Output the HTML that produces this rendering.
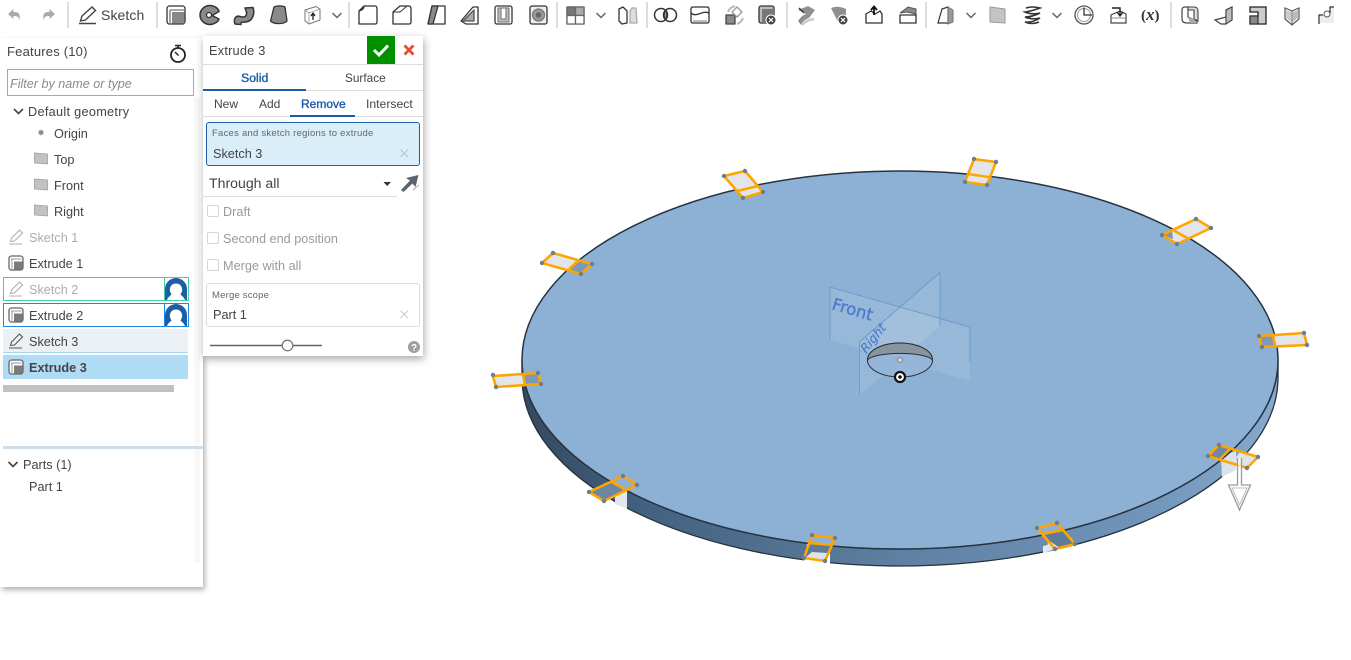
<!DOCTYPE html>
<html>
<head>
<meta charset="utf-8">
<style>
html,body{margin:0;padding:0;background:#fff;width:1351px;height:660px;overflow:hidden}
body{position:relative;font-family:"Liberation Sans",sans-serif;color:#333}
.a{position:absolute}
.t{position:absolute;white-space:nowrap;line-height:16px;height:16px;font-size:12.700px;color:#444}
.g{color:#adadad}
.cb{position:absolute;left:207px;width:10px;height:10px;border:1px solid #d5d5d5;border-radius:2px;background:#fff}
</style>
</head>
<body>

<!-- 3D viewport -->
<svg class="a" style="left:0;top:0" width="1351" height="660" viewBox="0 0 1351 660">
<defs>
<linearGradient id="band" x1="522" x2="1278" y1="0" y2="0" gradientUnits="userSpaceOnUse">
<stop offset="0" stop-color="#33495f"/><stop offset=".15" stop-color="#42607e"/><stop offset=".5" stop-color="#5f80a2"/><stop offset=".8" stop-color="#6f93b8"/><stop offset="1" stop-color="#86a9ce"/>
</linearGradient>
</defs>
<path d="M522 360 A378 189 0 0 0 1278 360 L1278 378 A378 188 0 0 1 522 378 Z" fill="url(#band)" stroke="#26323d" stroke-width="1.300"/>
<!-- notches in side -->
<path d="M615 494 L627 491 L627 509 L615 504 Z" fill="#e3e7eb"/>
<path d="M807 544 L830 546 L830 565 L804 563 Z" fill="#fff"/>
<path d="M810 551 L826 552 L825 559 L808 558 Z" fill="#dfe4e8"/>
<path d="M1043 546 L1066 541 L1066 546 L1043 553 Z" fill="#e6eaee"/>
<path d="M1221 456 L1236 451 L1236 470 L1222 478 Z" fill="#dbe3ea"/>
<path d="M1224 476 L1236 470 L1236 484 L1224 484 Z" fill="#fff"/>
<ellipse cx="900" cy="360" rx="378" ry="189" fill="#8db0d5" stroke="#27333f" stroke-width="1.500"/>
<!-- planes -->
<path d="M830 287 L970 327 L970 381 L830 340 Z" fill="#fff" fill-opacity=".1"/>
<path d="M859.500 342 L940 272.500 L940 326 L859.500 395 Z" fill="#fff" fill-opacity=".1"/>
<path d="M830 340 V287 L970 327 V362" fill="none" stroke="#6d9bcb" stroke-width="1"/>
<path d="M859.500 395 V342 L940 272.500 V326" fill="none" stroke="#6d9bcb" stroke-width="1"/>
<!-- hole -->
<ellipse cx="900" cy="360" rx="32.500" ry="17" fill="#95b6d9" stroke="#2a2f35" stroke-width="1"/>
<path d="M867.500 360 A32.500 17 0 0 1 932.500 360 A33 8 0 0 0 867.500 360 Z" fill="#8a949e" stroke="#2a2f35" stroke-width="1"/>
<circle cx="900" cy="360" r="2.500" fill="#cfd6dc" stroke="#85909a" stroke-width="1.200"/>
<text transform="matrix(.96 .28 -.28 .96 831 309)" font-family="DejaVu Sans" font-size="16.500" fill="#4b7ccb" stroke="#4b7ccb" stroke-width=".35">Front</text>
<text transform="matrix(.62 -.78 .72 .7 866 354)" font-family="DejaVu Sans" font-style="italic" font-size="12.500" fill="#4b7ccb" stroke="#4b7ccb" stroke-width=".2">Right</text>
<circle cx="900" cy="377" r="5" fill="#fff" stroke="#111" stroke-width="2.200"/>
<circle cx="900" cy="377" r="1.800" fill="#111"/>

<!-- sketch quads -->
<g stroke-linejoin="round">
<g fill="#e2e6ea" stroke="none">
<path d="M542 263 L553 253 L592 264 L581 274Z"/>
<path d="M493 375 L538 373 L541 384 L496 387Z"/>
<path d="M724 176 L745 171 L763 192 L743 198Z"/>
<path d="M974 159 L996 162 L987 185 L965 182Z"/>
<path d="M1162 235 L1196 219 L1211 228 L1177 244Z"/>
<path d="M1259 336 L1304 333 L1307 345 L1262 347Z"/>
</g>
<g fill="#7e99b8" stroke="none">
<path d="M578 261 L592 264 L581 274 L569 269Z"/>
<path d="M523 374 L538 373 L541 384 L524 385Z"/>
<path d="M1259 336 L1273 335 L1275 346 L1262 347Z"/>
<path d="M1162 235 L1172 230 L1173 239Z" />
<path d="M1219 446 L1230 449 L1220 459 L1208 456Z" fill="#6d88a5"/>
<path d="M612 482 L623 476 L637 485 L626 490Z" fill="#8db0d5"/>
<path d="M590 492 L612 482 L626 490 L604 501Z" fill="#6d87a3"/>
<path d="M812 535 L835 538 L832 545 L809 543Z" fill="#8db0d5"/>
<path d="M809 543 L833 545 L825 561 L804 558Z" fill="#5f7b98"/>
<path d="M1037 528 L1057 523 L1063 530 L1043 534Z" fill="#8db0d5"/>
<path d="M1043 534 L1063 530 L1075 544 L1055 549Z" fill="#5f7b98"/>
</g>
<path d="M812 552 L827 553 L825 561 L805 558Z" fill="#dfe4e8"/>
<path d="M1048 540 L1060 548 L1055 549 L1047 551Z" fill="#dfe4e8"/>
<path d="M1246 468 L1258 457 L1240 452 L1232 462Z" fill="#dfe4e8"/>
<g fill="none" stroke="#ffa500" stroke-width="2.600">
<path d="M542 263 L553 253 L592 264 L581 274Z M578 261 L569 269"/>
<path d="M493 376 L538 373 L541 384 L496 387Z M523 374 L525 385"/>
<path d="M724 176 L745 171 L763 192 L743 198Z M737 191 L758 186"/>
<path d="M974 159 L996 162 L987 185 L965 182Z M968 174 L989 177"/>
<path d="M1162 235 L1196 219 L1211 228 L1177 244Z M1173 230 L1189 239"/>
<path d="M1259 336 L1304 333 L1307 345 L1262 347Z M1273 335 L1275 346"/>
<path d="M1208 456 L1219 445 L1258 457 L1247 468Z M1230 449 L1220 459"/>
<path d="M812 535 L835 538 L825 561 L804 558Z M809 543 L833 545"/>
<path d="M1037 528 L1057 523 L1075 544 L1055 549Z M1043 534 L1063 530"/>
<path d="M589 492 L623 476 L637 485 L604 501Z M612 482 L626 490"/>
</g>
<g fill="#6a7d92">
<circle cx="542" cy="263" r="2.200"/><circle cx="553" cy="253" r="2.200"/><circle cx="592" cy="264" r="2.200"/><circle cx="581" cy="274" r="2.200"/>
<circle cx="493" cy="375" r="2.200"/><circle cx="538" cy="373" r="2.200"/><circle cx="541" cy="384" r="2.200"/><circle cx="496" cy="387" r="2.200"/>
<circle cx="724" cy="176" r="2.200"/><circle cx="745" cy="171" r="2.200"/><circle cx="763" cy="192" r="2.200"/><circle cx="743" cy="198" r="2.200"/>
<circle cx="974" cy="159" r="2.200"/><circle cx="996" cy="162" r="2.200"/><circle cx="987" cy="185" r="2.200"/><circle cx="965" cy="182" r="2.200"/>
<circle cx="1162" cy="235" r="2.200"/><circle cx="1196" cy="219" r="2.200"/><circle cx="1211" cy="228" r="2.200"/><circle cx="1177" cy="244" r="2.200"/>
<circle cx="1259" cy="336" r="2.200"/><circle cx="1304" cy="333" r="2.200"/><circle cx="1307" cy="345" r="2.200"/><circle cx="1262" cy="347" r="2.200"/>
<circle cx="1208" cy="456" r="2.200"/><circle cx="1219" cy="445" r="2.200"/><circle cx="1258" cy="457" r="2.200"/><circle cx="1247" cy="468" r="2.200"/>
<circle cx="812" cy="535" r="2.200"/><circle cx="835" cy="538" r="2.200"/><circle cx="825" cy="561" r="2.200"/><circle cx="804" cy="558" r="2.200"/>
<circle cx="1037" cy="528" r="2.200"/><circle cx="1057" cy="523" r="2.200"/><circle cx="1075" cy="544" r="2.200"/><circle cx="1055" cy="549" r="2.200"/>
<circle cx="589" cy="492" r="2.200"/><circle cx="623" cy="476" r="2.200"/><circle cx="637" cy="485" r="2.200"/><circle cx="604" cy="501" r="2.200"/>
</g>
</g>
<!-- direction arrow -->
<path d="M1237.500 458 V485 H1228.500 L1239.500 510 L1250.500 485 H1241.500 V458" fill="#fff" fill-opacity=".7" stroke="#9a9a9a" stroke-width="1.300"/>
<path d="M1232 488 H1247 L1239.500 505 Z" fill="none" stroke="#bdbdbd" stroke-width="1"/>
</svg>

<!-- left panel -->
<div class="a" style="left:0;top:38px;width:203px;height:549px;background:#fff;box-shadow:2px 3px 5px rgba(0,0,0,.3)"></div>
<div class="a" style="left:194px;top:98px;width:6px;height:465px;background:#f8f8f8"></div>
<div class="t" style="left:7px;top:44px;font-size:13px;letter-spacing:.2px">Features (10)</div>
<div class="a" style="left:7px;top:69px;width:185px;height:25px;border:1px solid #a8a8a8;background:#fff"></div>
<div class="t" style="left:10px;top:76px;font-style:italic;font-size:12.600px;color:#8a8a8a">Filter by name or type</div>

<div class="t" style="left:28px;top:104px;letter-spacing:.3px">Default geometry</div>
<div class="t" style="left:54px;top:126px">Origin</div>
<div class="t" style="left:54px;top:152px">Top</div>
<div class="t" style="left:54px;top:178px">Front</div>
<div class="t" style="left:54px;top:204px">Right</div>
<div class="t g" style="left:29px;top:230px">Sketch 1</div>
<div class="t" style="left:29px;top:256px">Extrude 1</div>

<div class="a" style="left:3px;top:277px;width:184px;height:22px;border:1px solid #44cf9f"></div>
<div class="a" style="left:164px;top:277px;width:1px;height:24px;background:#44cf9f"></div>
<div class="t g" style="left:29px;top:282px">Sketch 2</div>
<div class="a" style="left:3px;top:303px;width:184px;height:22px;border:1px solid #1e8ae6"></div>
<div class="a" style="left:164px;top:303px;width:1px;height:24px;background:#1e8ae6"></div>
<div class="t" style="left:29px;top:308px">Extrude 2</div>
<div class="a" style="left:3px;top:329px;width:185px;height:23px;background:#ebf0f4;border-bottom:1px solid #a5d6f3"></div>
<div class="t" style="left:29px;top:334px">Sketch 3</div>
<div class="a" style="left:3px;top:355px;width:185px;height:24px;background:#b0dbf5"></div>
<div class="t" style="left:29px;top:360px;font-weight:bold">Extrude 3</div>
<div class="a" style="left:3px;top:385px;width:171px;height:7px;background:#c1c1c1"></div>
<div class="a" style="left:3px;top:446px;width:200px;height:3px;background:#cfdde8"></div>
<div class="t" style="left:23px;top:457px">Parts (1)</div>
<div class="t" style="left:29px;top:479px">Part 1</div>

<!-- panel icons -->
<svg class="a" style="left:0;top:0" width="203" height="500" viewBox="0 0 203 500">
<defs>
<g id="ext"><rect x="-7" y="-7" width="14" height="14" rx="2.500" fill="#fff" stroke="#666" stroke-width="1.300"/><path d="M-5 -4 H5.500 M-4 -3.500 V6" stroke="#999" fill="none"/><rect x="-2" y="-1.500" width="8.500" height="8" fill="#7b7b7b"/></g>
<g id="pen"><path d="M-7 7 H6 M-5.500 4.500 L-4.500 1 L3.500 -7 L6.500 -4 L-1.500 4 Z" fill="none" stroke="currentColor" stroke-width="1.100"/></g>
<path id="pl" d="M-6.500 -5 L6.500 -4 V6 L-6.500 5 Z" fill="#c2c2c2" stroke="#9f9f9f" stroke-width=".8"/>
<g id="av"><rect x="-11" y="-11" width="22" height="22" fill="#fff"/><path d="M-11 11 V0 A11 11 0 0 1 11 0 V11 H9 C8 8 6 7 4.500 5.500 C6 3 6.500 1 6 -1 C5 -4 3 -5.500 0 -5.500 C-3 -5.500 -5 -4 -6 -1 C-6.500 1 -6 3 -4.500 5.500 C-6 7 -8 8 -9 11 Z" fill="#1c5fa6"/></g>
</defs>
<path d="M14 109 L18.500 113.500 L23 109" fill="none" stroke="#444" stroke-width="1.600"/>
<path d="M8.500 462 L13 466.500 L17.500 462" fill="none" stroke="#444" stroke-width="1.600"/>
<circle cx="41" cy="132.500" r="2.500" fill="#888" stroke="#ccc"/>
<use href="#pl" x="41" y="158"/><use href="#pl" x="41" y="184"/><use href="#pl" x="41" y="210"/>
<use href="#pen" x="16" y="237" color="#b0b0b0"/>
<use href="#ext" x="16" y="263"/>
<use href="#pen" x="16" y="289" color="#b0b0b0"/>
<use href="#ext" x="16" y="315"/>
<use href="#pen" x="16" y="341" color="#555"/>
<use href="#ext" x="16" y="367"/>
<use href="#av" x="176" y="289"/>
<use href="#av" x="176" y="315"/>
<!-- stopwatch -->
<circle cx="178" cy="55" r="7" fill="#fff" stroke="#222" stroke-width="1.800"/>
<path d="M175 45.500 H181 M178 46 V48 M175 52 L178.500 55.500" stroke="#222" stroke-width="1.500" fill="none"/>
</svg>

<!-- dialog -->
<div class="a" style="left:203px;top:36px;width:220px;height:320px;background:#fff;box-shadow:1px 3px 8px rgba(0,0,0,.35)"></div>
<div class="a" style="left:203px;top:64px;width:220px;height:1px;background:#ddd"></div>
<div class="a" style="left:367px;top:36px;width:28px;height:28px;background:#009100"></div>
<div class="t" style="left:209px;top:43px;font-size:12.800px;letter-spacing:.2px">Extrude 3</div>
<div class="t" style="left:241px;top:70px;color:#1b5aa8;font-size:12.300px;-webkit-text-stroke:.35px #1b5aa8">Solid</div>
<div class="t" style="left:345px;top:70px;font-size:11.800px;color:#444">Surface</div>
<div class="a" style="left:203px;top:90px;width:220px;height:1px;background:#ddd"></div>
<div class="a" style="left:203px;top:89px;width:103px;height:2px;background:#1b5aa8"></div>
<div class="t" style="left:214px;top:96px;font-size:12px;color:#444">New</div>
<div class="t" style="left:259px;top:96px;font-size:12px;color:#444">Add</div>
<div class="t" style="left:301px;top:96px;font-size:12px;color:#1b5aa8;-webkit-text-stroke:.35px #1b5aa8">Remove</div>
<div class="t" style="left:366px;top:96px;font-size:12.200px;color:#444">Intersect</div>
<div class="a" style="left:203px;top:116px;width:220px;height:1px;background:#ddd"></div>
<div class="a" style="left:290px;top:115px;width:65px;height:2px;background:#1b5aa8"></div>

<div class="a" style="left:206px;top:122px;width:212px;height:42px;background:#d9eef8;border:1px solid #1f5fa8;border-radius:3px"></div>
<div class="t" style="left:212px;top:125.500px;font-size:9.500px;letter-spacing:.24px;color:#666">Faces and sketch regions to extrude</div>
<div class="t" style="left:213px;top:146px;font-size:12.700px;color:#444">Sketch 3</div>
<div class="t" style="left:209px;top:175px;font-size:14.100px;color:#444">Through all</div>
<div class="a" style="left:203px;top:196px;width:194px;height:1px;background:#ddd"></div>

<div class="cb" style="top:205px"></div>
<div class="t g" style="left:223px;top:204px;color:#9a9a9a">Draft</div>
<div class="cb" style="top:232px"></div>
<div class="t g" style="left:223px;top:231px;color:#9a9a9a">Second end position</div>
<div class="cb" style="top:259px"></div>
<div class="t g" style="left:223px;top:258px;color:#9a9a9a">Merge with all</div>

<div class="a" style="left:206px;top:283px;width:212px;height:42px;border:1px solid #ddd;border-radius:3px"></div>
<div class="t" style="left:212px;top:288px;font-size:9.500px;letter-spacing:.2px;color:#666">Merge scope</div>
<div class="t" style="left:213px;top:307px;font-size:12.700px;color:#444">Part 1</div>

<svg class="a" style="left:203px;top:36px" width="220" height="320" viewBox="203 36 220 320">
<path d="M374 50 L379 55 L388 45.500" fill="none" stroke="#fff" stroke-width="3"/>
<path d="M404.500 45.500 L413.500 54.500 M413.500 45.500 L404.500 54.500" stroke="#e2502c" stroke-width="2.800"/>
<path d="M400.500 149.500 L408 157 M408 149.500 L400.500 157" stroke="#b9c6cd" stroke-width="1"/>
<path d="M400.500 310.500 L408 318 M408 310.500 L400.500 318" stroke="#ccc" stroke-width="1"/>
<path d="M383.500 182 H391 L387.200 186 Z" fill="#333"/>
<path d="M401 190 L410 180.500 L406 178 L418.500 175 L415.500 187 L412.500 183.500 L403.500 192 Z" fill="#5b646c"/>
<path d="M413 190 L419 185" stroke="#aaa" stroke-width="1"/>
<path d="M210 345.500 H322" stroke="#666" stroke-width="1.500"/>
<circle cx="287.500" cy="345.500" r="5.300" fill="#fff" stroke="#666" stroke-width="1.100"/>
<circle cx="414" cy="347" r="6" fill="#9aa0a6"/>
<text x="414" y="351" text-anchor="middle" font-family="Liberation Sans" font-weight="bold" font-size="10" fill="#fff">?</text>
</svg>

<!-- toolbar -->
<div class="t" style="left:101px;top:7px;font-size:14px;color:#444;letter-spacing:.1px">Sketch</div>
<svg class="a" style="left:0;top:0" width="1335" height="34" viewBox="0 0 1335 34">
<defs>
<g id="chev"><path d="M-4.500 -2 L0 2.500 L4.500 -2" fill="none" stroke="#666" stroke-width="1.500"/></g>
<rect id="sep" x="-1" y="2" width="2" height="26" fill="#ddd"/>
</defs>
<use href="#sep" x="68" y="0"/><use href="#sep" x="157" y="0"/><use href="#sep" x="349" y="0"/><use href="#sep" x="557" y="0"/><use href="#sep" x="647" y="0"/><use href="#sep" x="787" y="0"/><use href="#sep" x="926" y="0"/><use href="#sep" x="1171" y="0"/>
<use href="#chev" x="337" y="15"/><use href="#chev" x="601" y="15"/><use href="#chev" x="971" y="15"/><use href="#chev" x="1057" y="15"/>
<!-- undo/redo -->
<path d="M8 14 L13.500 9 V12 H15 C19 12 20.500 15 19.500 20 C18.500 16.500 17 16 13.500 16 V19 Z" fill="#aaa"/>
<path d="M55 14 L49.500 9 V12 H48 C44 12 42.500 15 43.500 20 C44.500 16.500 46 16 49.500 16 V19 Z" fill="#aaa"/>
<!-- pencil -->
<path d="M79 23.500 H96 M80.500 21 L82 16 L92 7 L95.500 10.500 L85.500 20 Z" fill="none" stroke="#444" stroke-width="1.400"/>
<g fill="none" stroke="#333" stroke-width="1.300" stroke-linejoin="round">
<!-- extrude -->
<rect x="167" y="6" width="18" height="18" rx="2.500" fill="#fff"/><path d="M170 10 H184 M170 10 V23" stroke="#777"/><rect x="172" y="12" width="12.500" height="11.500" fill="#888" stroke="none"/>
<!-- revolve -->
<path d="M213 6 C206 4 200 9 200 15 C200 21 206 26 213 24 C216 23 218.500 21 219 19 L212 15.500 L219 11.500 C218.500 9 216 7 213 6 Z" fill="#8a8a8a" stroke-width="1.500"/><circle cx="209" cy="15" r="2.500" fill="#fff"/>
<!-- sweep -->
<path d="M235 24 C233 19 236 15 240 16.500 C245 18 247 16 246.500 12 L245 8 L253 7.500 C255 13 253 21 246 22 C242 22.500 241 21 241 24.500 Z" fill="#8a8a8a" stroke-width="1.500"/>
<!-- loft -->
<path d="M274 7 C277 5.500 282 5.500 285 7 L287 21 C284 24.500 274 24.500 270.500 21 Z" fill="#8a8a8a"/>
<!-- thicken -->
<path d="M305 10 L316 6.500 L320 9 V20 L309 24 L305 21 Z" fill="#fff" stroke="#777" stroke-width="1"/><path d="M305 10 L309 13 V24 M309 13 L320 9" stroke="#999" stroke-width=".8"/><path d="M313 20 V14 M311 16 L313 13 L315 16" stroke="#222" stroke-width="1.300"/>
<!-- fillet -->
<path d="M359 24 V11 L364 6 H375 Q377 6 377 9 V22 Q377 24 375 24 Z" fill="#fff"/><path d="M359 11 C362 10 364 9 364 6" />
<!-- chamfer -->
<path d="M393 24 V12 L400 6 H409 Q411 6 411 9 V22 Q411 24 409 24 Z" fill="#fff"/><path d="M393 12 H400 L407 6" stroke-width="1"/>
<!-- draft -->
<path d="M428 24 L432 6 H445 V24 Z" fill="#fff"/><path d="M428 24 L432 6 H438 L433 24 Z" fill="#8a8a8a"/>
<!-- rib -->
<path d="M461 21 L473 7 H478 V24 H466 Z" fill="#fff"/><path d="M463 21 L474 10 V21 Z" fill="#aaa" stroke="#555"/>
<!-- shell -->
<rect x="495" y="6" width="17" height="18" rx="2" fill="#fff"/><rect x="498" y="8" width="11" height="14" fill="#bbb" stroke="#888"/><rect x="501" y="8" width="5" height="11" fill="#fff" stroke="#888"/>
<!-- hole -->
<rect x="530" y="6" width="17" height="18" rx="2" fill="#eee"/><circle cx="538.500" cy="15" r="6" fill="#999" stroke="#777"/><circle cx="538.500" cy="15" r="2.800" fill="#666" stroke="none"/>
<!-- pattern -->
<rect x="567" y="7" width="17" height="17" fill="#fff" stroke="#555"/><rect x="567" y="7" width="8.500" height="8.500" fill="#777" stroke="#666"/><rect x="575.500" y="7" width="8.500" height="8.500" fill="#aaa" stroke="#666"/><rect x="567" y="15.500" width="8.500" height="8.500" fill="#fff" stroke="#666"/><rect x="575.500" y="15.500" width="8.500" height="8.500" fill="#fff" stroke="#666"/>
<!-- mirror -->
<path d="M619 9 L623 7 L627 11 V23 L622 24 L619 21 Z" fill="#fff"/><path d="M630 11 L632 8 L636 8 L637 23 H630 Z" fill="#ddd" stroke="#aaa"/>
<!-- boolean -->
<circle cx="661" cy="15" r="6.500" fill="#fff" stroke-width="1.500"/><circle cx="670" cy="15" r="6.500" fill="none" stroke-width="1.500"/><path d="M665.500 10.500 C667.500 13 667.500 17 665.500 19.500 C663.500 17 663.500 13 665.500 10.500 Z" fill="#999"/>
<!-- split -->
<path d="M691 9 Q691 7 693 7 H707 Q709 7 709 9 V21 Q709 23 707 23 H693 Q691 23 691 21 Z" fill="#fff"/><path d="M691 13 C696 18 702 10 709 13" /><path d="M693 21 H707" stroke="#999"/>
<!-- transform -->
<rect x="726" y="15" width="9" height="9" fill="#8a8a8a" stroke="#444"/><path d="M737 7 L742 12 L737 17 L732 12 Z" fill="#fff" stroke="#999"/><path d="M728 12 A10 10 0 0 1 735 6 M743 18 A10 10 0 0 1 737 24" stroke="#bbb" stroke-width="2"/>
<!-- delete -->
<rect x="759" y="6" width="15" height="17" rx="2" fill="#bbb"/><rect x="762" y="9" width="12" height="14" fill="#777" stroke="none"/>
</g>
<circle cx="771" cy="20" r="5" fill="#444" stroke="#fff"/><path d="M769 18 L773 22 M773 18 L769 22" stroke="#fff" stroke-width="1.200"/>
<!-- direct edit icons -->
<path d="M798 10 L808 6 L815 10 L809 18 Q803 20 801 25 L798 21 Q802 15 806 14 Z" fill="#8f8f8f"/><path d="M799 8 L804 13" stroke="#333" stroke-width="1.300"/><path d="M802 25 Q806 20 814 19" stroke="#ccc" stroke-width="2.500" fill="none"/>
<path d="M831 8 Q838 5 846 9 V17 L838 22 Q834 14 831 8 Z" fill="#8f8f8f"/><circle cx="843" cy="20" r="5" fill="#444" stroke="#fff"/><path d="M841 18 L845 22 M845 18 L841 22" stroke="#fff" stroke-width="1.200"/>
<path d="M866 14 L871 11 L875 14 L880 11 L882 14 V23 H866 Z" fill="#fff" stroke="#333" stroke-width="1.300"/><path d="M874 15 V8 M871 10 L874 6.500 L877 10" stroke="#111" stroke-width="1.800" fill="none"/>
<path d="M900 13 L908 7 L916 9 V14 L907 12 Z" fill="#8a8a8a" stroke="#555"/><path d="M900 15 H916 V23 H900 Z" fill="#fff" stroke="#333" stroke-width="1.300"/>
<!-- plane tools -->
<path d="M938 23 L942 9 L948 7 V23 Z" fill="#fff" stroke="#333" stroke-width="1.200"/><path d="M948 7 L953 10 V22 L948 24 Z" fill="#9a9a9a" stroke="#777"/>
<path d="M990 7 L1005 9 V23 L990 22 Z" fill="#c4c4c4" stroke="#999"/>
<!-- helix -->
<path d="M1026 8 Q1032 6 1040 8 Q1032 11 1025 12 Q1032 15 1040 13 Q1032 17 1025 17 Q1032 20 1040 18 Q1032 23 1025 22 Q1032 25 1039 22" fill="none" stroke="#333" stroke-width="1.600"/>
<!-- clock -->
<circle cx="1084" cy="15" r="9" fill="#fff" stroke="#555" stroke-width="1.300"/><circle cx="1084" cy="15" r="6.500" fill="none" stroke="#999"/><path d="M1084 7.500 V15 H1092" fill="none" stroke="#333" stroke-width="1.300"/>
<!-- variable studio -->
<path d="M1111 15 L1120 11 L1126 14 V23 H1111 Z" fill="#fff" stroke="#444" stroke-width="1.200"/><path d="M1111 18 H1126" stroke="#888"/><path d="M1112 8 H1120 V15 M1117 12 L1120 16 L1123 12" fill="none" stroke="#222" stroke-width="1.400"/>
<text x="1141" y="20" font-family="Liberation Serif" font-weight="bold" font-size="15" fill="#333">(<tspan font-style="italic" font-size="17">x</tspan>)</text>
<!-- sheet metal -->
<path d="M1182 10 Q1182 7 1185 7 H1188 V17 L1197 21 V23 H1187 Q1182 23 1182 19 Z" fill="#fff" stroke="#444" stroke-width="1.200"/><path d="M1188 7 H1194 Q1198 7 1198 11 V21 L1194 19 V10 L1188 10 Z" fill="#ddd" stroke="#444" stroke-width="1.100"/><path d="M1188 17 L1194 19 L1197 23 H1190 Z" fill="#aaa"/>
<path d="M1215 20 L1226 17 V10 L1232 7 V20 L1225 24 H1221 Z" fill="#fff" stroke="#444" stroke-width="1.200"/><path d="M1226 17 V10 L1232 7 V20 L1226 24 Z" fill="#bbb" stroke="#444" stroke-width="1.100"/>
<path d="M1250 7 H1266 V24 H1250 V16 H1258 V12 H1250 Z" fill="#ccc" stroke="#222" stroke-width="1.300"/><rect x="1250" y="16" width="8" height="8" fill="#888" stroke="#222"/>
<path d="M1285 8 L1292 11 L1299 8 V19 L1292 25 L1285 19 Z" fill="#fff" stroke="#555" stroke-width="1.200"/><path d="M1292 11 V25" stroke="#555"/><path d="M1286 10 L1291 12 V22 L1286 18 Z" fill="#ccc"/><path d="M1293 12 L1298 10 V18 L1293 22 Z" fill="#bbb"/>
<path d="M1318 24 V15 H1324 L1329 11 V7 H1334 V23 H1320 Z" fill="#eee" stroke="none"/><path d="M1319 24 V15 H1323 M1330 13 V7 H1334" fill="none" stroke="#333" stroke-width="1.200"/><circle cx="1327" cy="14" r="3" fill="#fff" stroke="#555"/>
</svg>

</body>
</html>
